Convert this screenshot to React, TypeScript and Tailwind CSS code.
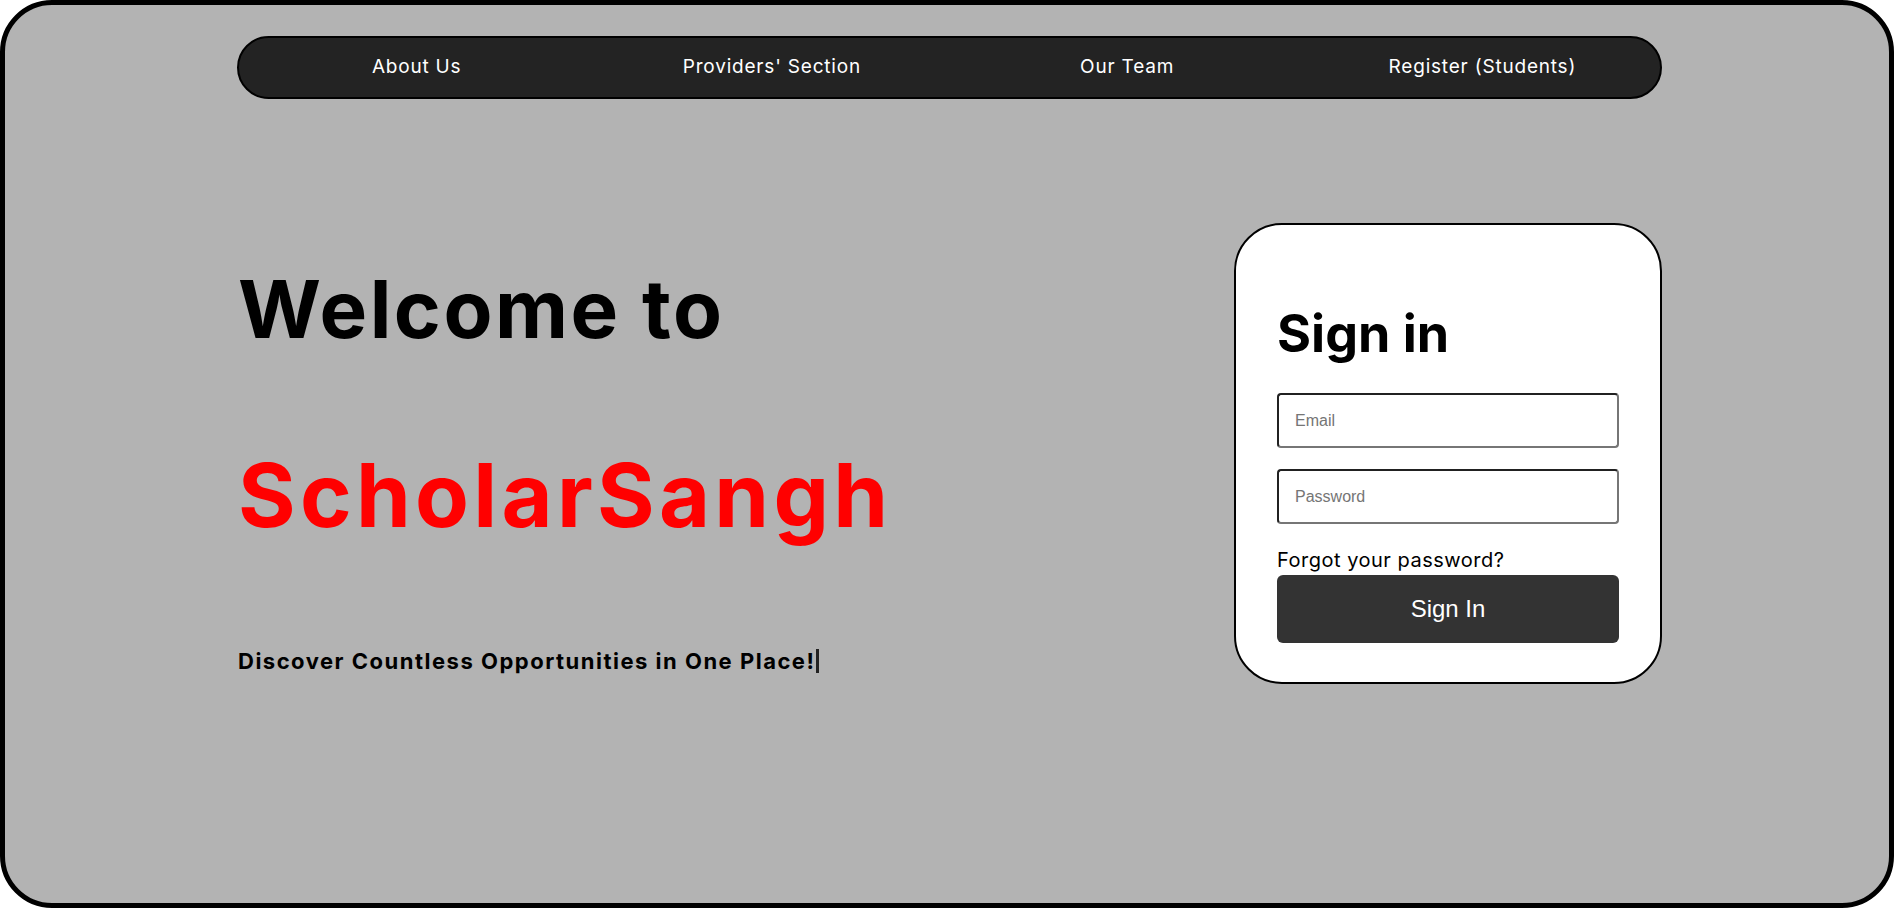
const navLinks = ["About Us", "Providers' Section", "Our Team", "Register (Students)"];

const Navbar = () => {
  return (
    <nav className="mt-[31px] ml-[232px] grid h-[63px] w-[1425px] grid-cols-4 items-center rounded-full border-2 border-black bg-[#232323] text-center">
      {navLinks.map((link) => (
        <a key={link} href="#" className="text-[19px] tracking-[0.8px] text-white">
          {link}
        </a>
      ))}
    </nav>
  );
};

const SignInCard = () => {
  return (
    <div className="w-[428px] rounded-[48px] border-2 border-black bg-white px-[41px] pt-[83px] pb-[39px]">
      <h2 className="text-[52px] leading-none font-bold text-black">Sign in</h2>
      <form className="mt-[33px] flex flex-col">
        <input
          type="email"
          placeholder="Email"
          className="h-[55px] w-full rounded-sm border-2 border-[#767676] bg-white pl-4 font-['Liberation_Sans',Arial,sans-serif] text-base text-black outline-none [border-style:inset] placeholder:text-[#757575]"
        />
        <input
          type="password"
          placeholder="Password"
          className="mt-[21px] h-[55px] w-full rounded-sm border-2 border-[#767676] bg-white pl-4 font-['Liberation_Sans',Arial,sans-serif] text-base text-black outline-none [border-style:inset] placeholder:text-[#757575]"
        />
        <a href="#" className="mt-[24px] text-[20px] leading-6 tracking-[0.5px] text-black">
          Forgot your password?
        </a>
        <button
          type="button"
          className="mt-[3px] h-[68px] w-full rounded-md bg-[#333333] font-['Liberation_Sans',Arial,sans-serif] text-2xl text-white"
        >
          Sign In
        </button>
      </form>
    </div>
  );
};

export default function App() {
  return (
    <div className="h-screen w-full bg-white font-['Inter',sans-serif]">
      <div className="flex h-full flex-col rounded-[52px] border-[5px] border-black bg-[#b3b3b3]">
        <Navbar />
        <main className="mt-[124px] ml-[232px] flex w-[1425px] items-start justify-between">
          {/* Left column */}
          <div className="pt-[46px] pl-[1px]">
            <h1 className="text-[80px] leading-none font-bold tracking-[2.5px] text-black">
              Welcome to
            </h1>
            <h1 className="mt-[102px] text-[88px] leading-none font-bold tracking-[4.3px] text-[#ff0000]">
              ScholarSangh
            </h1>
            <p className="mt-[110px] flex items-center text-[22px] leading-none font-bold tracking-[1.5px] text-black">
              Discover Countless Opportunities in One Place!
              <span className="ml-[1px] inline-block h-[24px] w-[3px] bg-[#222]" />
            </p>
          </div>
          {/* Right column */}
          <SignInCard />
        </main>
      </div>
    </div>
  );
}
